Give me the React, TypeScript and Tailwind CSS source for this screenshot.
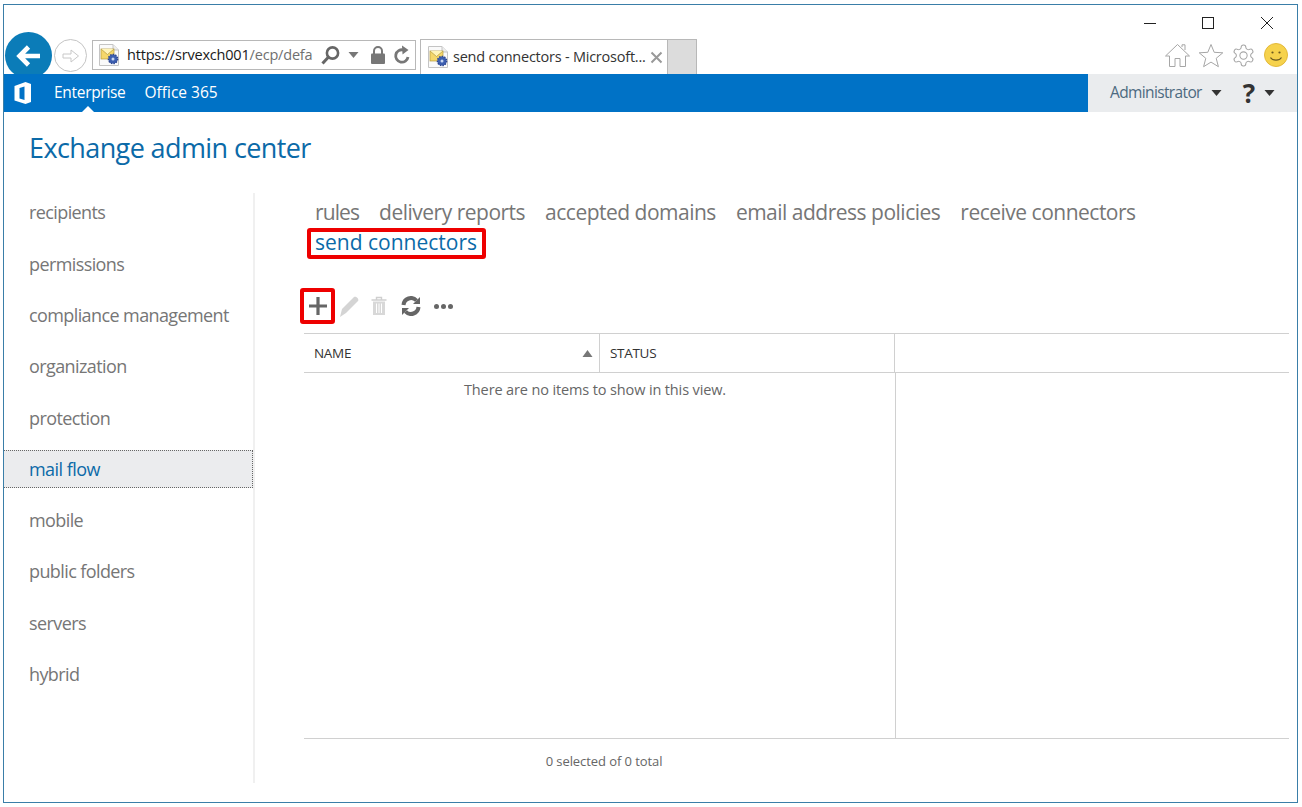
import React from "react";

const font = { fontFamily: '"Open Sans","Noto Sans",sans-serif' };

function PageIcon() {
  return (
    <svg width="22" height="24" viewBox="0 0 22 24" className="shrink-0">
      <path d="M1.5 1.5H15L20.5 7V22.5H1.5Z" fill="#fafafa" stroke="#c4c4c4" />
      <path d="M15 1.5V7H20.5" fill="#eee" stroke="#c4c4c4" />
      <rect x="3" y="6" width="13" height="10" fill="#f5d76a" stroke="#b59a3c" strokeWidth="0.7" />
      <path d="M3 6L9.5 11.5L16 6" fill="#fff4b8" stroke="#b59a3c" strokeWidth="0.7" />
      <circle cx="15" cy="16" r="4.6" fill="#3d5fb0" />
      <circle cx="15" cy="16" r="4.6" fill="none" stroke="#2c4590" strokeWidth="1.4" strokeDasharray="1.4 1.2" />
      <circle cx="15" cy="16" r="1.5" fill="#c7d6f2" />
    </svg>
  );
}

function Caret({ color = "#4a4a4a" }: { color?: string }) {
  return (
    <svg width="11" height="6" viewBox="0 0 11 6" className="shrink-0">
      <path d="M0.5 0H10.5L5.5 6Z" fill={color} />
    </svg>
  );
}

function ChromeBar() {
  return (
    <div className="h-[69px] shrink-0 relative">
      <div className="flex justify-end items-center h-[35px] pr-[23px]">
        <svg width="14" height="14" viewBox="0 0 14 14" className="mr-[44px]"><path d="M1 7.5H13" stroke="#222" /></svg>
        <svg width="14" height="14" viewBox="0 0 14 14" className="mr-[45px]"><rect x="1.5" y="1.5" width="11" height="11" fill="none" stroke="#222" /></svg>
        <svg width="14" height="14" viewBox="0 0 14 14"><path d="M1 1L13 13M13 1L1 13" stroke="#222" /></svg>
      </div>
      <div className="flex items-start h-[34px]">
        <div className="w-[47px] h-[47px] ml-[1px] -mt-[8px] rounded-full bg-[#0b7cb8] flex items-center justify-center shrink-0 z-0 relative">
          <svg width="28" height="28" viewBox="0 0 28 28">
            <path d="M25 14H5M13.5 5L4.5 14L13.5 23" fill="none" stroke="#fff" strokeWidth="4.6" />
          </svg>
        </div>
        <div className="w-[33px] h-[33px] ml-[2px] mt-[-1px] rounded-full border border-[#c4c4c4] flex items-center justify-center shrink-0">
          <svg width="20" height="20" viewBox="0 0 20 20">
            <path d="M2 8H10V4L17.5 10L10 16V12H2Z" fill="none" stroke="#c8c8c8" />
          </svg>
        </div>
        <div className="ml-[5px] w-[324px] h-[30px] border border-[#b8b8b8] flex items-center pl-[5px] shrink-0">
          <PageIcon />
          <span className="ml-[7px] text-[14.5px] leading-none whitespace-nowrap tracking-[-0.19px] w-[188px]">
            <span className="text-[#1a1a1a]">https://srvexch001</span><span className="text-[#707070]">/ecp/defa</span>
          </span>
          <svg width="21" height="21" viewBox="0 0 21 21" className="ml-[5px] shrink-0">
            <circle cx="12.5" cy="8" r="5.6" fill="none" stroke="#666" strokeWidth="2.6" />
            <path d="M8.5 12L2.5 18.5" stroke="#666" strokeWidth="3" />
          </svg>
          <span className="ml-[7px]"><Caret color="#777" /></span>
          <svg width="16" height="20" viewBox="0 0 16 20" className="ml-[11px] shrink-0">
            <path d="M4 9V6A4 4 0 0 1 12 6V9" fill="none" stroke="#777" strokeWidth="2" />
            <rect x="1" y="8.5" width="14" height="10.5" rx="1" fill="#777" />
          </svg>
          <svg width="18" height="20" viewBox="0 0 18 20" className="ml-[7px] shrink-0">
            <path d="M15 12A6.2 6.2 0 1 1 10.5 5" fill="none" stroke="#777" strokeWidth="2.8" />
            <path d="M9 0.5L15.5 5L9.5 9.5Z" fill="#777" />
          </svg>
        </div>
        <div className="ml-[4px] -mt-[1px] w-[248px] h-[35px] border border-b-0 border-[#b8b8b8] flex items-center pl-[6px] shrink-0">
          <PageIcon />
          <span className="ml-[4px] text-[14.5px] leading-none whitespace-nowrap tracking-[-0.23px] text-[#333] w-[194px]">send connectors - Microsoft...</span>
          <svg width="13" height="13" viewBox="0 0 13 13" className="ml-[3px] shrink-0">
            <path d="M1.5 1.5L11.5 11.5M11.5 1.5L1.5 11.5" stroke="#999" strokeWidth="2" />
          </svg>
        </div>
        <div className="w-[29px] h-[35px] -mt-[1px] bg-[#dcdcdc] border-t border-r border-[#b8b8b8] shrink-0" />
        <div className="flex-1" />
        <div className="flex items-center gap-[7px] pr-[9px] h-[30px]">
          <svg width="27" height="25" viewBox="0 0 27 25">
            <path d="M13.5 1.5L1.5 13H5.5V23.5H11V15.5H16V23.5H21.5V13H25.5Z" fill="none" stroke="#a6a6a6" />
            <path d="M18 4V1.8H21V7" fill="none" stroke="#a6a6a6" />
          </svg>
          <svg width="26" height="25" viewBox="0 0 26 25">
            <path d="M13 1.5L16.2 9.3L24.8 9.8L18.2 15.3L20.4 23.7L13 19.1L5.6 23.7L7.8 15.3L1.2 9.8L9.8 9.3Z" fill="none" stroke="#a6a6a6" />
          </svg>
          <svg width="25" height="25" viewBox="0 0 24 24" fill="none" stroke="#a6a6a6" strokeWidth="1">
            <path d="M12.22 2h-.44a2 2 0 0 0-2 2v.18a2 2 0 0 1-1 1.73l-.43.25a2 2 0 0 1-2 0l-.15-.08a2 2 0 0 0-2.73.73l-.22.38a2 2 0 0 0 .73 2.73l.15.1a2 2 0 0 1 1 1.72v.51a2 2 0 0 1-1 1.74l-.15.09a2 2 0 0 0-.73 2.73l.22.38a2 2 0 0 0 2.73.73l.15-.08a2 2 0 0 1 2 0l.43.25a2 2 0 0 1 1 1.73V20a2 2 0 0 0 2 2h.44a2 2 0 0 0 2-2v-.18a2 2 0 0 1 1-1.73l.43-.25a2 2 0 0 1 2 0l.15.08a2 2 0 0 0 2.73-.73l.22-.39a2 2 0 0 0-.73-2.73l-.15-.08a2 2 0 0 1-1-1.74v-.5a2 2 0 0 1 1-1.74l.15-.09a2 2 0 0 0 .73-2.73l-.22-.38a2 2 0 0 0-2.73-.73l-.15.08a2 2 0 0 1-2 0l-.43-.25a2 2 0 0 1-1-1.73V4a2 2 0 0 0-2-2z" />
            <circle cx="12" cy="12" r="3.5" />
          </svg>
          <svg width="24" height="24" viewBox="0 0 24 24" className="ml-[1px]">
            <circle cx="12" cy="12" r="11.5" fill="#f6d24c" stroke="#e3b93a" />
            <circle cx="8.5" cy="9.5" r="1.1" fill="#6b5a20" />
            <circle cx="15.5" cy="9.5" r="1.1" fill="#6b5a20" />
            <path d="M6.5 14.5C8.5 18 15.5 18 17.5 14.5" fill="none" stroke="#6b5a20" strokeWidth="1.1" />
          </svg>
        </div>
      </div>
    </div>
  );
}

function BlueBar() {
  return (
    <div className="h-[38px] flex shrink-0 relative z-10">
      <div className="flex-1 bg-[#0072c6] flex items-center relative">
        <svg width="20" height="24" viewBox="0 0 20 24" className="ml-[9px] shrink-0">
          <path fillRule="evenodd" d="M1.5 5L12.5 1L18 3V21L12.5 23L1.5 19.5ZM6.5 7L11.5 5.5V19L6.5 17.5Z" fill="#fff" />
        </svg>
        <span className="ml-[21px] text-white text-[15.5px] tracking-[-0.3px] leading-none">Enterprise</span>
        <span className="ml-[19px] text-white text-[15.5px] leading-none">Office 365</span>
        <div className="absolute left-[78px] bottom-0 w-0 h-0 border-l-[6px] border-r-[6px] border-b-[6px] border-l-transparent border-r-transparent border-b-white" />
      </div>
      <div className="w-[209px] bg-[#eaecee] flex items-center pl-[22px] shrink-0">
        <span className="text-[#4d6a80] text-[15.5px] tracking-[-0.63px] leading-none">Administrator</span>
        <span className="ml-[9px]"><Caret color="#333" /></span>
        <span className="ml-[21px] text-[#333] text-[26px] font-bold leading-none">?</span>
        <span className="ml-[9px]"><Caret color="#333" /></span>
      </div>
    </div>
  );
}

const navItems = ["recipients", "permissions", "compliance management", "organization", "protection", "mail flow", "mobile", "public folders", "servers", "hybrid"];

function Sidebar() {
  return (
    <div className="w-[249px] h-[590px] shrink-0 border-r-[2px] border-[#f0f0f0] box-content pt-[0.4px]">
      {navItems.map((n) =>
        n === "mail flow" ? (
          <div key={n} className="h-[38px] mb-[13.3px] flex items-center pl-[25px] bg-[#ebecee] border-y border-r border-dotted border-[#666] text-[#0b6aa8] text-[18px] tracking-[-0.55px] leading-none">{n}</div>
        ) : (
          <div key={n} className="h-[38px] mb-[13.3px] flex items-center pl-[25px] text-[#767676] text-[18px] tracking-[-0.6px] leading-none">{n}</div>
        )
      )}
    </div>
  );
}

function Toolbar() {
  return (
    <div className="h-[36px] flex items-center ml-[-4px]">
      <div className="w-[35px] h-[36px] border-[4px] border-[#ee0000] rounded-[3px] flex items-center justify-center shrink-0">
        <svg width="20" height="20" viewBox="0 0 20 20" className="shrink-0"><path d="M10 1V19M1 10H19" stroke="#666" strokeWidth="3.2" /></svg>
      </div>
      <svg width="24" height="24" viewBox="0 0 24 24" className="ml-[2px] shrink-0">
        <path d="M3 23L5 15L17 3C19 1.5 22.5 5 21 7L9 19Z" fill="#d4d4d4" />
      </svg>
      <svg width="18" height="20" viewBox="0 0 18 20" className="ml-[9px] shrink-0">
        <path d="M1.5 4H16.5M6.5 4V1.5H11.5V4" fill="none" stroke="#cfcfcf" strokeWidth="1.4" />
        <path d="M3 5.5H15V19H3Z" fill="#d8d8d8" />
        <path d="M6.5 7.5V17M9 7.5V17M11.5 7.5V17" stroke="#fff" />
      </svg>
      <svg width="20" height="20" viewBox="0 0 20 20" className="ml-[13px] shrink-0">
        <path d="M2.5 9A7.5 7.5 0 0 1 15.5 4.5" fill="none" stroke="#666" strokeWidth="4" />
        <path d="M17.5 11A7.5 7.5 0 0 1 4.5 15.5" fill="none" stroke="#666" strokeWidth="4" />
        <path d="M12 8H19V1Z" fill="#666" />
        <path d="M8 12H1V19Z" fill="#666" />
      </svg>
      <div className="ml-[13px] flex gap-[2px] shrink-0">
        <div className="w-[5px] h-[5px] rounded-full bg-[#666]" />
        <div className="w-[5px] h-[5px] rounded-full bg-[#666]" />
        <div className="w-[5px] h-[5px] rounded-full bg-[#666]" />
      </div>
    </div>
  );
}

function Main() {
  return (
    <div className="flex-1 pl-[49px] pr-[8px] min-w-0">
      <div className="flex gap-x-[20px] items-center h-[32px] mt-[3px] text-[#767676] text-[21px] tracking-[-0.5px] whitespace-nowrap leading-none pl-[11px]">
        <span className="tracking-[-0.9px]">rules</span>
        <span>delivery reports</span>
        <span>accepted domains</span>
        <span>email address policies</span>
        <span>receive connectors</span>
      </div>
      <div className="ml-[3px] w-[179px] h-[31px] border-[4px] border-[#ee0000] rounded-[3px] flex items-center pl-[4px] pb-[3px] text-[#0b6aa8] text-[21px] whitespace-nowrap leading-none">send connectors</div>
      <div className="h-[29px]" />
      <Toolbar />
      <div className="h-[9px]" />
      <div className="border-t border-b border-[#d0d0d0] h-[40px] flex text-[13.5px] tracking-[-0.3px] text-[#333]">
        <div className="w-[296px] border-r border-[#d0d0d0] flex items-center pl-[10px] pr-[6px] justify-between">
          <span>NAME</span>
          <svg width="11" height="7" viewBox="0 0 11 7"><path d="M0.5 7H10.5L5.5 0Z" fill="#777" /></svg>
        </div>
        <div className="w-[295px] border-r border-[#d0d0d0] flex items-center pl-[10px]">STATUS</div>
      </div>
      <div className="h-[366px] border-b border-[#d0d0d0] flex">
        <div className="w-[592px] border-r border-[#d0d0d0] pr-[9px] pt-[7px] text-center text-[14.5px] tracking-[-0.13px] text-[#666] leading-[20px]">There are no items to show in this view.</div>
      </div>
      <div className="w-[600px] pt-[12px] text-center text-[13px] tracking-[-0.08px] text-[#666] leading-[20px]">0 selected of 0 total</div>
    </div>
  );
}

export default function App() {
  return (
    <div className="w-[1302px] h-[807px] bg-white overflow-hidden pt-[4px] pl-[3px]" style={font}>
      <div className="w-[1295px] h-[799px] border border-[#3a7ea8] flex flex-col bg-white overflow-hidden">
        <ChromeBar />
        <BlueBar />
        <div className="h-[81px] shrink-0 flex items-center pl-[25px] pb-[10px] text-[#0b6aa8] text-[27px] tracking-[-0.6px] leading-none">Exchange admin center</div>
        <div className="flex flex-1 min-h-0">
          <Sidebar />
          <Main />
        </div>
      </div>
    </div>
  );
}
